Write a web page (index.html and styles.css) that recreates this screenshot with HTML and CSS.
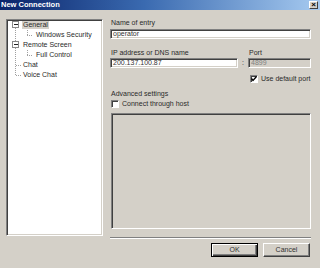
FILE: index.html
```html
<!DOCTYPE html>
<html>
<head>
<meta charset="utf-8">
<link rel="stylesheet" href="styles.css">
</head>
<body>
<div class="window">
  <div class="titlebar">
    <span class="title">New Connection</span>
    <span class="close">×</span>
  </div>
  <div class="main">
    <div class="tree">
      <div class="row">
        <svg class="g1" width="15" height="10" viewBox="0 0 15 10">
          <rect x="4.5" y="1.5" width="6" height="6" fill="#fff" stroke="#888"/>
          <path d="M5.5 4.5H9.5" stroke="#222"/>
          <path d="M7.5 8V10" stroke="#a0a0a0" stroke-dasharray="1 1"/>
        </svg>
        <span class="label sel">General</span>
      </div>
      <div class="row">
        <svg class="g2" width="27" height="10" viewBox="0 0 27 10">
          <path d="M7.5 0V10" stroke="#a0a0a0" stroke-dasharray="1 1"/>
          <path d="M19.5 0V5M19 5.5H25" stroke="#a0a0a0" stroke-dasharray="1 1"/>
        </svg>
        <span class="label">Windows Security</span>
      </div>
      <div class="row">
        <svg class="g1" width="15" height="10" viewBox="0 0 15 10">
          <path d="M7.5 0V1" stroke="#a0a0a0"/>
          <rect x="4.5" y="1.5" width="6" height="6" fill="#fff" stroke="#888"/>
          <path d="M5.5 4.5H9.5" stroke="#222"/>
          <path d="M7.5 8V10" stroke="#a0a0a0" stroke-dasharray="1 1"/>
        </svg>
        <span class="label">Remote Screen</span>
      </div>
      <div class="row">
        <svg class="g2" width="27" height="10" viewBox="0 0 27 10">
          <path d="M7.5 0V10" stroke="#a0a0a0" stroke-dasharray="1 1"/>
          <path d="M19.5 0V5M19 5.5H25" stroke="#a0a0a0" stroke-dasharray="1 1"/>
        </svg>
        <span class="label">Full Control</span>
      </div>
      <div class="row">
        <svg class="g1" width="15" height="10" viewBox="0 0 15 10">
          <path d="M7.5 0V10M8 5.5H14" stroke="#a0a0a0" stroke-dasharray="1 1"/>
        </svg>
        <span class="label">Chat</span>
      </div>
      <div class="row">
        <svg class="g1" width="15" height="10" viewBox="0 0 15 10">
          <path d="M7.5 0V5M8 5.5H14" stroke="#a0a0a0" stroke-dasharray="1 1"/>
        </svg>
        <span class="label">Voice Chat</span>
      </div>
    </div>
    <div class="panel">
      <div class="lbl">Name of entry</div>
      <div class="input wide">operator</div>
      <div class="lblrow">
        <div class="lbl ipcell">IP address or DNS name</div>
        <div class="lbl portlbl">Port</div>
      </div>
      <div class="inrow">
        <div class="input ip">200.137.100.87</div>
        <div class="colon">:</div>
        <div class="input port">4899</div>
      </div>
      <div class="check portcheck">
        <span class="box"><svg width="6" height="6" viewBox="0 0 6 6"><path d="M0.5 2.5L2 4.5L5.5 0.5" fill="none" stroke="#000" stroke-width="1.3"/></svg></span>
        <span>Use default port</span>
      </div>
      <div class="lbl adv">Advanced settings</div>
      <div class="check hostcheck">
        <span class="box"></span>
        <span>Connect through host</span>
      </div>
      <div class="area"></div>
      <div class="sep"></div>
      <div class="buttons">
        <div class="btn default">OK</div>
        <div class="btn">Cancel</div>
      </div>
    </div>
  </div>
</div>
</body>
</html>
```
FILE: styles.css
```css
html, body {
  margin: 0;
  padding: 0;
}
body {
  width: 320px;
  height: 268px;
  overflow: hidden;
  background: #d4d0c8;
  font-family: "Liberation Sans", Arial, sans-serif;
  font-size: 7px;
  color: #2a2a2a;
}
.window {
  width: 320px;
  height: 268px;
}
.titlebar {
  height: 10px;
  display: flex;
  align-items: center;
  justify-content: space-between;
  background: linear-gradient(to right, #0a246a 0%, #3a6ab0 45%, #a6caf0 100%);
  padding: 0 2px 0 1px;
}
.title {
  color: #fff;
  font-weight: bold;
  font-size: 7.5px;
  line-height: 10px;
}
.close {
  width: 9px;
  height: 8px;
  box-sizing: border-box;
  background: #d4d0c8;
  border: 1px solid;
  border-color: #fff #404040 #404040 #fff;
  font-size: 8px;
  line-height: 5px;
  text-align: center;
  color: #000;
  font-weight: bold;
}
.main {
  display: flex;
  padding: 9px 9px 0 6px;
  gap: 7px;
}
.tree {
  width: 97px;
  height: 217px;
  box-sizing: border-box;
  background: #fff;
  border: 1px solid;
  border-color: #808080 #fff #fff #808080;
  box-shadow: inset 1px 1px 0 #404040, inset -1px -1px 0 #d4d0c8;
  padding: 0 0 0 1px;
}
.row {
  display: flex;
  align-items: center;
  height: 10px;
}
.row svg {
  flex: none;
  display: block;
  shape-rendering: crispEdges;
}
.label {
  line-height: 8px;
  padding: 0 1px;
  white-space: nowrap;
  margin-left: -1px;
}
.g2 + .label {
  margin-left: 0;
}
.sel {
  background: #d4d0c8;
}
.panel {
  width: 201px;
  display: flex;
  flex-direction: column;
}
.lbl {
  line-height: 8px;
  height: 8px;
  padding-left: 1px;
  white-space: nowrap;
}
.input {
  height: 10px;
  box-sizing: border-box;
  background: #fff;
  border: 1px solid;
  border-color: #808080 #fff #fff #808080;
  box-shadow: inset 1px 1px 0 #404040, inset -1px -1px 0 #d4d0c8;
  padding: 0 2px;
  line-height: 8px;
  color: #333;
  white-space: nowrap;
}
.wide {
  margin-top: 2px;
}
.lblrow {
  display: flex;
  margin-top: 10px;
}
.ipcell {
  width: 138px;
  box-sizing: border-box;
}
.portlbl {
  padding-left: 1px;
}
.inrow {
  display: flex;
  margin-top: 1px;
}
.ip {
  width: 128px;
}
.colon {
  width: 10px;
  text-align: center;
  line-height: 10px;
}
.port {
  flex: 1;
  background: #d4d0c8;
  color: #808080;
}
.check {
  display: flex;
  align-items: center;
  gap: 3px;
  height: 8px;
  line-height: 8px;
}
.box {
  width: 8px;
  height: 8px;
  box-sizing: border-box;
  background: #fff;
  border: 1px solid;
  border-color: #808080 #fff #fff #808080;
  box-shadow: inset 1px 1px 0 #404040;
  display: flex;
  align-items: center;
  justify-content: center;
}
.box svg {
  display: block;
}
.portcheck {
  margin-top: 7px;
  margin-left: 140px;
}
.adv {
  margin-top: 7px;
}
.hostcheck {
  margin-top: 2px;
  margin-left: 1px;
}
.area {
  margin-top: 5px;
  height: 116px;
  box-sizing: border-box;
  border: 1px solid;
  border-color: #808080 #fff #fff #808080;
  box-shadow: inset 1px 1px 0 #404040, inset -1px -1px 0 #d4d0c8;
  background: #d4d0c8;
  margin-left: 1px;
}
.sep {
  margin-top: 8px;
  height: 2px;
  box-sizing: border-box;
  border-top: 1px solid #808080;
  border-bottom: 1px solid #fff;
}
.buttons {
  display: flex;
  justify-content: flex-end;
  gap: 5px;
  margin-top: 4px;
  padding-right: 1px;
}
.btn {
  width: 47px;
  height: 14px;
  box-sizing: border-box;
  border: 1px solid;
  border-color: #fff #404040 #404040 #fff;
  box-shadow: inset -1px -1px 0 #808080;
  text-align: center;
  line-height: 12px;
  color: #333;
}
.default {
  border: 1px solid #000;
  box-shadow: inset 1px 1px 0 #fff, inset -1px -1px 0 #404040, inset -2px -2px 0 #808080;
}
```
